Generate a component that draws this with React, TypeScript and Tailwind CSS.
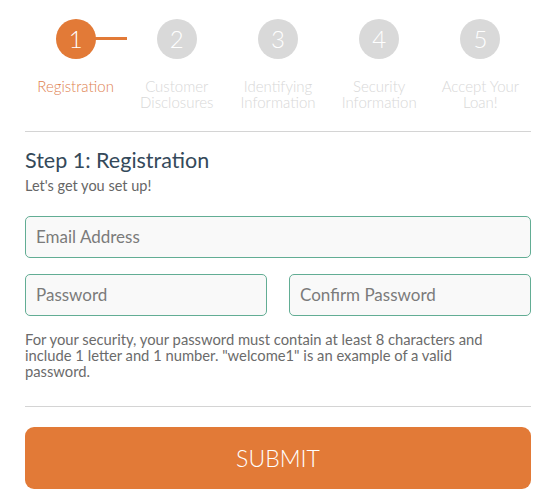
const steps = [
  ["Registration"],
  ["Customer", "Disclosures"],
  ["Identifying", "Information"],
  ["Security", "Information"],
  ["Accept Your", "Loan!"],
];

function Stepper() {
  return (
    <div className="grid grid-cols-5">
      {steps.map((lines, i) => {
        const active = i === 0;
        return (
          <div key={i} className="relative flex flex-col items-center">
            {active && <div className="absolute left-[68px] top-[18px] h-[3px] w-[34px] bg-[#e27a37]" />}
            <div
              className={`relative flex h-[40px] w-[40px] items-center justify-center rounded-full text-[24px] font-light text-white ${
                active ? "bg-[#e27a37]" : "bg-[#d9d9d9]"
              }`}
            >
              {i + 1}
            </div>
            <div
              className={`mt-[19px] text-center text-[15px] font-light leading-[16px] ${
                active ? "text-[#e08250]" : "text-[#d8d8d8]"
              }`}
            >
              {lines.map((l) => (
                <div key={l} className="h-[16px]">{l}</div>
              ))}
            </div>
          </div>
        );
      })}
    </div>
  );
}

function Field({ placeholder }: { placeholder: string }) {
  return (
    <div className="flex h-[42px] items-center rounded-[5px] border border-[#62ad94] bg-[#f9f9f9] px-[10px] text-[17px] text-[#7b7b7b]">
      {placeholder}
    </div>
  );
}

export default function App() {
  return (
    <div className="min-h-[500px] w-[556px] bg-white px-[25px] pt-[19px] font-['Lato','Open_Sans',sans-serif]">
      <Stepper />
      <div className="mt-[21px] h-px bg-[#d4d4d4]" />
      <h1 className="mt-[14px] text-[21.5px] leading-[28px] text-[#34495a]">Step 1: Registration</h1>
      <p className="mt-[3px] text-[14.5px] leading-[18px] text-[#666]">Let's get you set up!</p>
      <div className="mt-[21px]">
        <Field placeholder="Email Address" />
      </div>
      <div className="mt-[16px] grid grid-cols-2 gap-[22px]">
        <Field placeholder="Password" />
        <Field placeholder="Confirm Password" />
      </div>
      <p className="mt-[15px] pr-[30px] text-[14.75px] leading-[16px] text-[#6b6b6b]">
        For your security, your password must contain at least 8 characters and include 1 letter and 1 number. "welcome1" is an example of a valid password.
      </p>
      <div className="mt-[27px] h-px bg-[#d4d4d4]" />
      <button className="mt-[20px] flex h-[62px] w-full items-center justify-center rounded-[9px] bg-[#e27a37] text-[23px] font-light text-white">
        SUBMIT
      </button>
    </div>
  );
}
